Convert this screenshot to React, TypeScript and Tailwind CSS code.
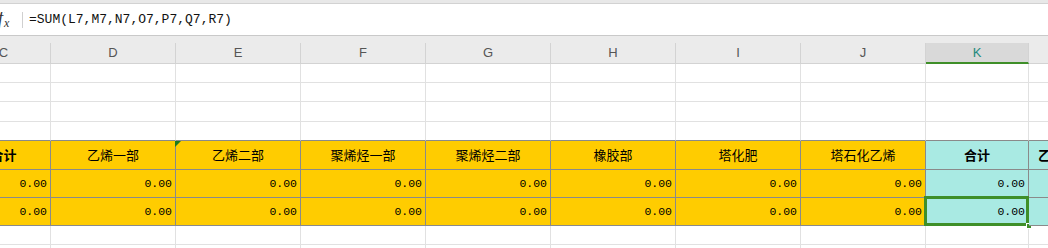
import React from "react";

type Col = {
  letter: string;
  w: string;
  name: string;
  bold?: boolean;
  teal?: boolean;
  align?: string;
};

const cols: Col[] = [
  { letter: "C", w: "w-[94px]", name: "合计", bold: true },
  { letter: "D", w: "w-[125px]", name: "乙烯一部" },
  { letter: "E", w: "w-[125px]", name: "乙烯二部" },
  { letter: "F", w: "w-[125px]", name: "聚烯烃一部" },
  { letter: "G", w: "w-[125px]", name: "聚烯烃二部" },
  { letter: "H", w: "w-[125px]", name: "橡胶部" },
  { letter: "I", w: "w-[125px]", name: "塔化肥" },
  { letter: "J", w: "w-[125px]", name: "塔石化乙烯" },
  { letter: "K", w: "w-[103px]", name: "合计", bold: true, teal: true },
  { letter: "L", w: "w-[125px]", name: "乙烯一部", bold: true, teal: true, align: "justify-start pl-[9px]" },
];

const cjk = "font-['SimSun','Noto_Sans_CJK_SC',sans-serif]";
const mono = "font-['Liberation_Mono','Noto_Sans_CJK_SC',monospace]";

function EmptyRow({ h, last }: { h: string; last?: boolean }) {
  return (
    <div className={`flex ${h}`}>
      {cols.map((c) => (
        <div
          key={c.letter}
          className={`${c.w} shrink-0 border-r border-[#e1e1e1] border-b ${last ? "border-b-[#8a8a8a]" : "border-b-[#e1e1e1]"}`}
        />
      ))}
    </div>
  );
}

export default function App() {
  return (
    <div className="w-[1048px] h-[248px] overflow-hidden bg-white">
      {/* top strip */}
      <div className="h-[4px] bg-[#e8e8e8] border-b border-[#d2d2d2]" />

      {/* formula bar */}
      <div className="h-[32px] flex items-center border-b border-[#c9c9c9]">
        <div className="w-[22px] h-[16px] relative overflow-hidden shrink-0">
          <span className="absolute -left-[2px] top-[-3px] text-[18px] italic text-[#333] font-['Liberation_Serif',serif] leading-none">f</span>
          <span className="absolute left-[4px] top-[5px] text-[12px] italic text-[#333] font-['Liberation_Serif',serif] leading-none">x</span>
        </div>
        <div className="w-px h-[16px] bg-[#d0d0d0]" />
        <span className={`ml-[6px] text-[13px] text-[#111] ${mono}`}>=SUM(L7,M7,N7,O7,P7,Q7,R7)</span>
      </div>

      <div className="-ml-[43px]">
        {/* column letters */}
        <div className="h-[28px] bg-[#ebebeb] pt-[7px]">
          <div className="flex h-[21px]">
            {cols.map((c) => (
              <div
                key={c.letter}
                className={`${c.w} shrink-0 flex items-center justify-center text-[13px] font-['Liberation_Sans',sans-serif] border-r border-[#d3d3d3] ${
                  c.letter === "K"
                    ? "bg-[#d9d9d9] text-[#1f8a7e] border-b-2 border-b-[#3f8f29]"
                    : "text-[#555] border-b border-b-[#d3d3d3]"
                }`}
              >
                {c.letter}
              </div>
            ))}
          </div>
        </div>

        <EmptyRow h="h-[19px]" />
        <EmptyRow h="h-[19px]" />
        <EmptyRow h="h-[20px]" />
        <EmptyRow h="h-[19px]" last />

        {/* table header */}
        <div className="flex h-[29px]">
          {cols.map((c) => (
            <div
              key={c.letter}
              className={`${c.w} shrink-0 relative flex items-center ${c.align ?? "justify-center"} border-r border-b border-[#8a8a8a] text-[13px] text-black ${cjk} ${
                c.bold ? "font-bold" : ""
              } ${c.teal ? "bg-[#a9eae3]" : "bg-[#ffcc00]"}`}
            >
              {c.letter === "E" && (
                <div className="absolute -left-px top-0 w-0 h-0 border-t-[6px] border-t-[#1f7a1f] border-r-[6px] border-r-transparent" />
              )}
              {c.name}
            </div>
          ))}
        </div>

        {/* data rows */}
        {[0, 1].map((r) => (
          <div key={r} className="flex h-[28px]">
            {cols.map((c) => (
              <div
                key={c.letter}
                className={`${c.w} shrink-0 relative flex items-center justify-end pr-[3px] border-r border-b border-[#8a8a8a] text-[11.5px] text-black ${mono} ${
                  c.teal ? "bg-[#a9eae3]" : "bg-[#ffcc00]"
                }`}
              >
                {c.letter !== "L" && "0.00"}
                {r === 1 && c.letter === "K" && (
                  <>
                    <div className="absolute -left-[2px] -top-[2px] -right-[1px] -bottom-[1px] border-[3px] border-[#3f8f29]" />
                    <div className="absolute -right-[4px] -bottom-[4px] w-[6px] h-[6px] bg-[#3f8f29] border border-white" />
                  </>
                )}
              </div>
            ))}
          </div>
        ))}

        <EmptyRow h="h-[19px]" />
        <EmptyRow h="h-[19px]" />
      </div>
    </div>
  );
}
